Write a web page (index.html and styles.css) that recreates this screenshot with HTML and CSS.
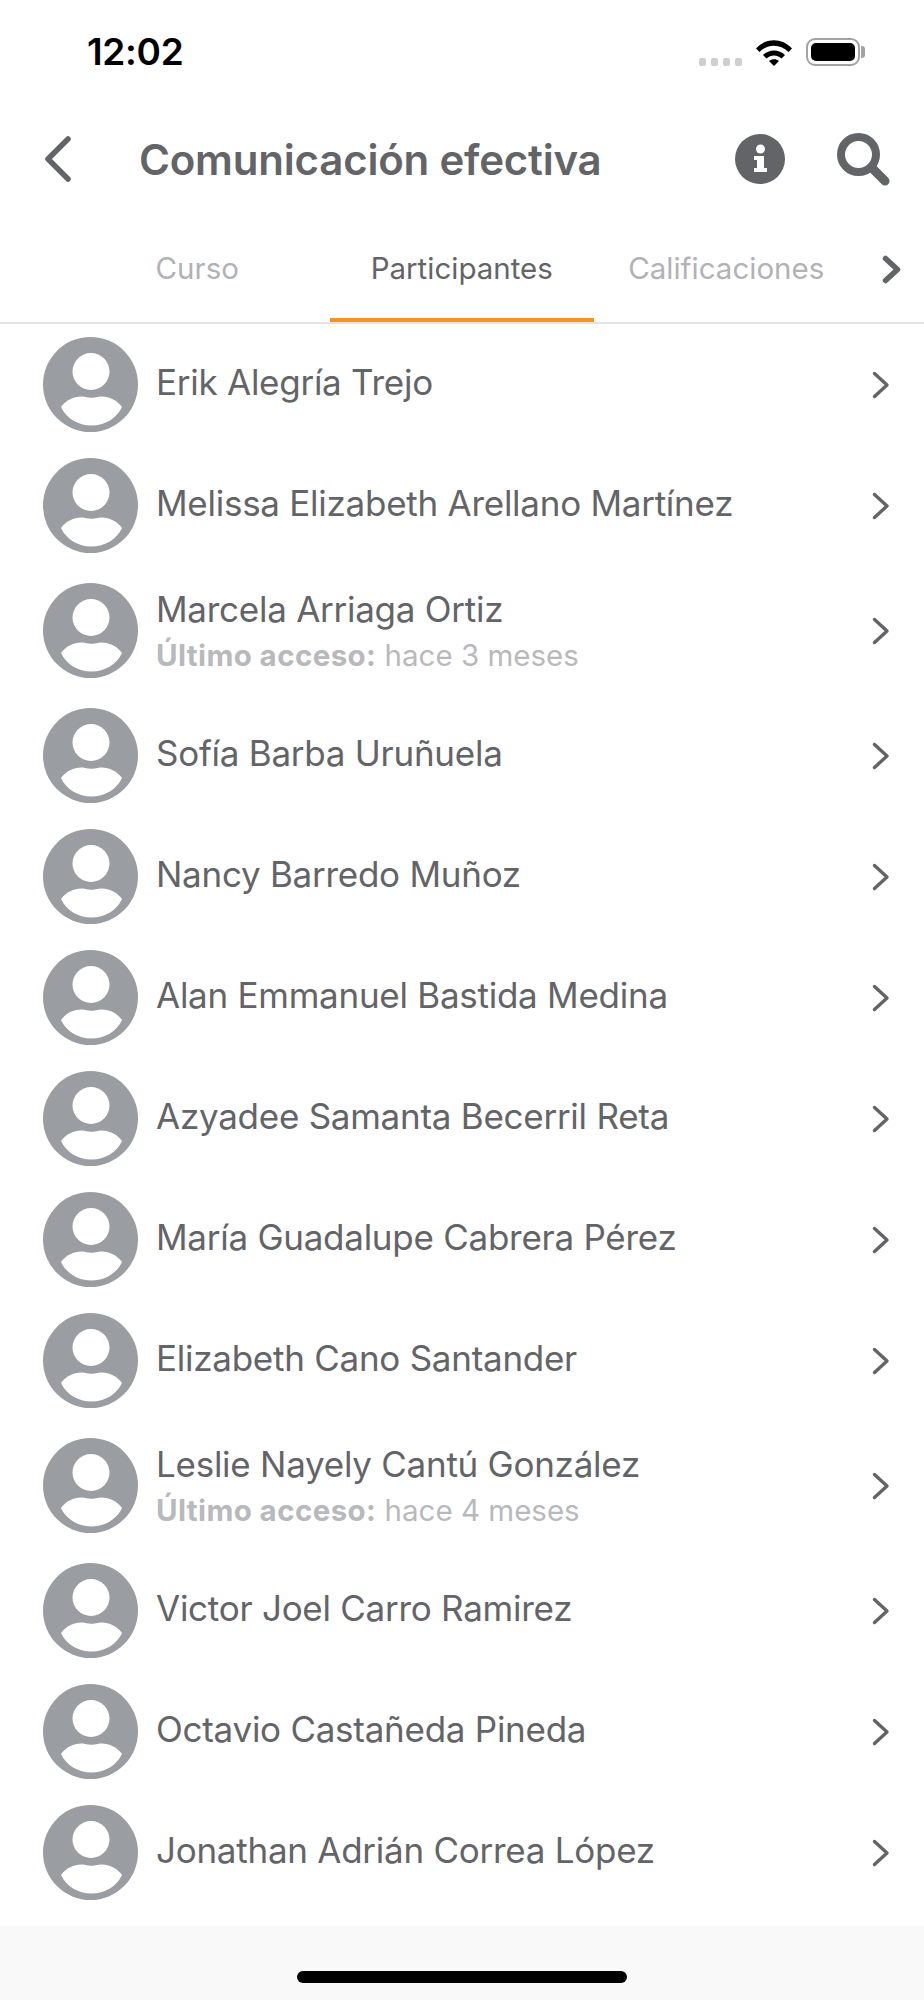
FILE: index.html
```html
<!DOCTYPE html>
<html lang="es">
<head>
    <meta charset="UTF-8">
    <meta name="viewport" content="width=device-width, initial-scale=1.0">
    <title>Participantes</title>
    <link rel="stylesheet" href="styles.css">
</head>
<body>
    <svg class="defs" width="0" height="0">
        <symbol id="avatar" viewBox="0 0 95 95">
            <circle cx="47.5" cy="47.5" r="47.5" fill="#9a9da1"/>
            <circle cx="48" cy="34.5" r="18.5" fill="#fff"/>
            <path fill="#fff" d="M18 70C23 63 31 59.500 38 59.500C43 59.500 45 60.800 48.500 60.800C52 60.800 54 59.500 59 59.500C66 59.500 74 63 79 70C74 81 62 88.500 48.500 88.500C35 88.500 23 81 18 70Z"/>
        </symbol>
        <symbol id="chevron" viewBox="0 0 18 28">
            <path d="M2.500 2.500L15 14L2.500 25.500" fill="none" stroke="#636468" stroke-width="3.400" stroke-linecap="round" stroke-linejoin="round"/>
        </symbol>
        <symbol id="chevron-bold" viewBox="0 0 19 29">
            <path d="M3.500 3.500L15.500 14.500L3.500 25.500" fill="none" stroke="#636468" stroke-width="5.500" stroke-linecap="round" stroke-linejoin="round"/>
        </symbol>
    </svg>

    <div class="status-bar">
        <span class="time">12:02</span>
        <div class="status-icons">
            <div class="signal"><i></i><i></i><i></i><i></i></div>
            <svg class="wifi" width="36" height="27" viewBox="0 0 36 27">
                <path d="M0 9.500C10 -1.500 26 -1.500 36 9.500L32.500 13C24 4.500 12 4.500 3.500 13Z"/>
                <path d="M7 16C13 10 23 10 29 16L25.500 19.500C21 15.500 15 15.500 10.500 19.500Z"/>
                <path d="M13 22C16 19.500 20 19.500 23 22L18 27Z"/>
            </svg>
            <div class="battery"><div class="battery-level"></div></div>
        </div>
    </div>

    <header class="top-bar">
        <svg class="back" width="27" height="46" viewBox="0 0 27 46">
            <path d="M24 3L4 23L24 43" fill="none" stroke="#636468" stroke-width="5.500" stroke-linecap="round" stroke-linejoin="round"/>
        </svg>
        <h1>Comunicación efectiva</h1>
        <svg class="info" width="50" height="50" viewBox="0 0 50 50">
            <circle cx="25" cy="25" r="25" fill="#636468"/>
            <circle cx="25.500" cy="15" r="4.500" fill="#fff"/>
            <path fill="#fff" d="M19 22H29V34H32V38H19V34H22V26H19Z"/>
        </svg>
        <svg class="search" width="53" height="53" viewBox="0 0 53 53">
            <circle cx="21.500" cy="21.500" r="17.500" fill="none" stroke="#636468" stroke-width="8"/>
            <path d="M35 35L48 48" stroke="#636468" stroke-width="9" stroke-linecap="round"/>
        </svg>
    </header>

    <nav class="tabs">
        <a class="tab">Curso</a>
        <a class="tab active">Participantes</a>
        <a class="tab">Calificaciones</a>
        <svg class="tab-more"><use href="#chevron-bold"/></svg>
    </nav>

    <ul class="participants">
        <li class="row"><svg class="avatar"><use href="#avatar"/></svg><div class="info-col"><span class="name">Erik Alegría Trejo</span></div><svg class="go"><use href="#chevron"/></svg></li>
        <li class="row"><svg class="avatar"><use href="#avatar"/></svg><div class="info-col"><span class="name">Melissa Elizabeth Arellano Martínez</span></div><svg class="go"><use href="#chevron"/></svg></li>
        <li class="row two-line"><svg class="avatar"><use href="#avatar"/></svg><div class="info-col"><span class="name">Marcela Arriaga Ortiz</span><span class="access"><b>Último acceso:</b> hace 3 meses</span></div><svg class="go"><use href="#chevron"/></svg></li>
        <li class="row"><svg class="avatar"><use href="#avatar"/></svg><div class="info-col"><span class="name">Sofía Barba Uruñuela</span></div><svg class="go"><use href="#chevron"/></svg></li>
        <li class="row"><svg class="avatar"><use href="#avatar"/></svg><div class="info-col"><span class="name">Nancy Barredo Muñoz</span></div><svg class="go"><use href="#chevron"/></svg></li>
        <li class="row"><svg class="avatar"><use href="#avatar"/></svg><div class="info-col"><span class="name">Alan Emmanuel Bastida Medina</span></div><svg class="go"><use href="#chevron"/></svg></li>
        <li class="row"><svg class="avatar"><use href="#avatar"/></svg><div class="info-col"><span class="name">Azyadee Samanta Becerril Reta</span></div><svg class="go"><use href="#chevron"/></svg></li>
        <li class="row"><svg class="avatar"><use href="#avatar"/></svg><div class="info-col"><span class="name">María Guadalupe Cabrera Pérez</span></div><svg class="go"><use href="#chevron"/></svg></li>
        <li class="row"><svg class="avatar"><use href="#avatar"/></svg><div class="info-col"><span class="name">Elizabeth Cano Santander</span></div><svg class="go"><use href="#chevron"/></svg></li>
        <li class="row two-line"><svg class="avatar"><use href="#avatar"/></svg><div class="info-col"><span class="name">Leslie Nayely Cantú González</span><span class="access"><b>Último acceso:</b> hace 4 meses</span></div><svg class="go"><use href="#chevron"/></svg></li>
        <li class="row"><svg class="avatar"><use href="#avatar"/></svg><div class="info-col"><span class="name">Victor Joel Carro Ramirez</span></div><svg class="go"><use href="#chevron"/></svg></li>
        <li class="row"><svg class="avatar"><use href="#avatar"/></svg><div class="info-col"><span class="name">Octavio Castañeda Pineda</span></div><svg class="go"><use href="#chevron"/></svg></li>
        <li class="row"><svg class="avatar"><use href="#avatar"/></svg><div class="info-col"><span class="name">Jonathan Adrián Correa López</span></div><svg class="go"><use href="#chevron"/></svg></li>
    </ul>

    <footer class="home-area">
        <div class="home-bar"></div>
    </footer>
</body>
</html>
```

FILE: styles.css
```css
* {
    box-sizing: border-box;
}
body {
    margin: 0;
    width: 924px;
    height: 2000px;
    overflow: hidden;
    display: flex;
    flex-direction: column;
    font-family: Inter, "Liberation Sans", sans-serif;
    background-color: #fff;
    color: #636468;
}
.defs {
    position: absolute;
}
.status-bar {
    height: 104px;
    display: flex;
    justify-content: space-between;
    padding: 30px 64px 0 87px;
}
.time {
    font-size: 37px;
    font-weight: 600;
    line-height: 44px;
    letter-spacing: -0.3px;
    color: #000;
}
.status-icons {
    display: flex;
    align-items: flex-start;
    padding-top: 8px;
}
.signal {
    display: flex;
    gap: 5px;
    margin: 20px 14px 0 0;
}
.signal i {
    width: 7px;
    height: 8px;
    border-radius: 2px;
    background-color: #cfcfcf;
}
.wifi {
    margin: 1px 14px 0 0;
}
.battery {
    position: relative;
    width: 54px;
    height: 28px;
    padding: 3px;
    border: 2px solid #a3a3a3;
    border-radius: 9px;
}
.battery::after {
    content: "";
    position: absolute;
    right: -7px;
    top: 6px;
    width: 4px;
    height: 12px;
    border-radius: 0 3px 3px 0;
    background-color: #a3a3a3;
}
.battery-level {
    height: 100%;
    border-radius: 5px;
    background-color: #000;
}
.top-bar {
    height: 112px;
    display: flex;
    align-items: center;
    padding: 0 34px 2px 44px;
}
.top-bar h1 {
    flex: 1;
    margin: 0 0 0 68px;
    font-size: 42px;
    font-weight: 600;
    letter-spacing: -0.2px;
}
.search {
    margin-left: 52px;
}
.tabs {
    height: 108px;
    display: flex;
    padding-left: 65px;
    border-bottom: 2px solid #e3e3e5;
}
.tab {
    width: 264.500px;
    padding-top: 34px;
    text-align: center;
    font-size: 29.500px;
    color: #b1b2b6;
}
.tab.active {
    color: #636468;
    border-bottom: 4px solid #f7931e;
}
.tab-more {
    width: 19px;
    height: 29px;
    margin: 39px 0 0 23px;
}
.participants {
    flex: 1;
    margin: 0;
    padding: 0;
    list-style: none;
}
.row {
    height: 121px;
    display: flex;
    align-items: center;
    padding: 0 34px 0 43px;
}
.row.two-line {
    height: 129px;
}
.avatar {
    width: 95px;
    height: 95px;
    flex-shrink: 0;
}
.info-col {
    flex: 1;
    display: flex;
    flex-direction: column;
    padding: 0 0 5px 18px;
}
.two-line .info-col {
    padding-bottom: 0;
}
.name {
    font-size: 35px;
    line-height: 44px;
    letter-spacing: -0.26px;
}
.access {
    margin-top: 5px;
    font-size: 29.500px;
    line-height: 38px;
    color: #b8b9bc;
}
.access b {
    letter-spacing: 0.4px;
}
.go {
    width: 18px;
    height: 28px;
}
.home-area {
    height: 74px;
    display: flex;
    justify-content: center;
    padding-top: 45px;
    background-color: #f9f9f9;
}
.home-bar {
    width: 330px;
    height: 12px;
    border-radius: 6px;
    background-color: #000;
}
```
